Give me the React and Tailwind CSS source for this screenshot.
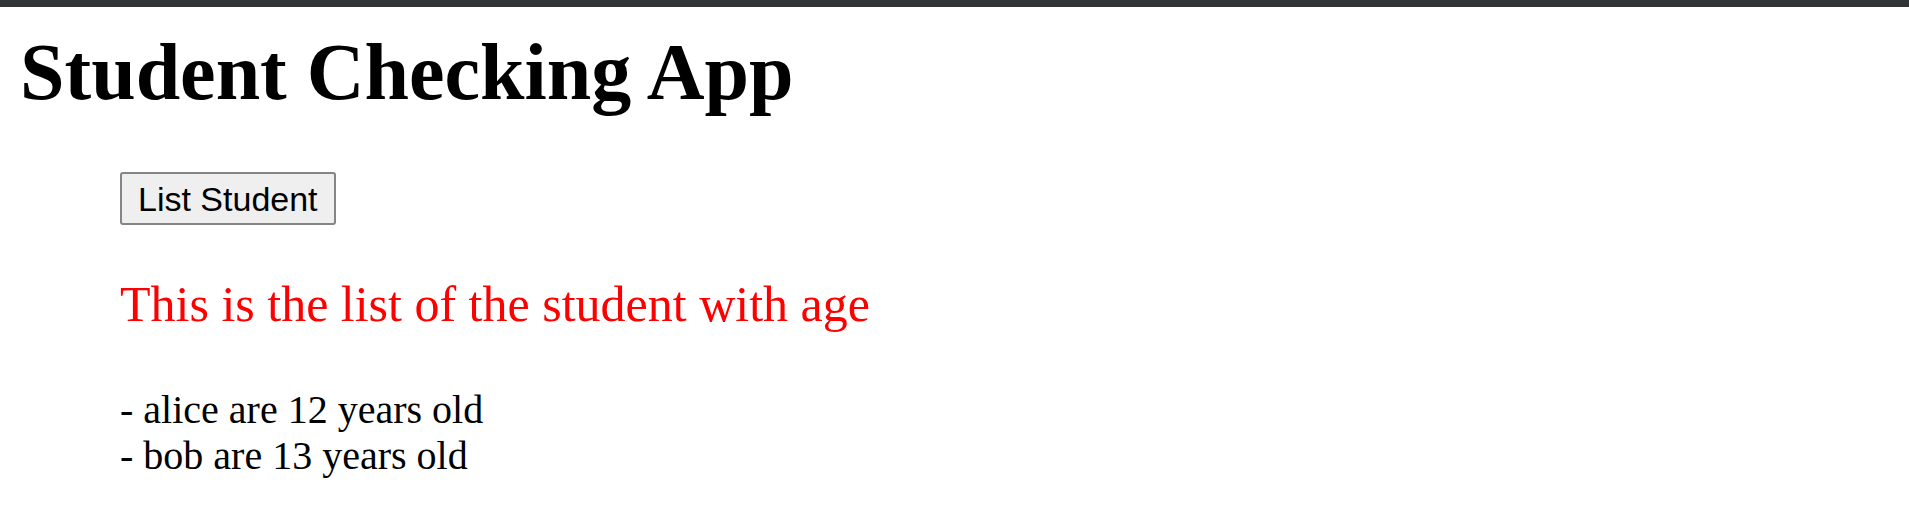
import React from 'react';

const students = [
  { name: 'alice', age: 12 },
  { name: 'bob', age: 13 },
];

const App = () => {
  return (
    <div className="min-h-screen bg-white text-black font-['Liberation_Serif','Times_New_Roman',serif]">
      {/* dark strip along the top edge */}
      <div className="h-[7px] bg-[#333438]" />

      <div className="px-[20px]">
        <h1 className="mt-[25px] text-[80px] leading-[80px] font-bold">Student Checking App</h1>

        <div className="pl-[100px]">
          <button className="mt-[60px] h-[53px] px-[16px] bg-[#efefef] border-2 border-[#858585] rounded-[3px] text-[34px] leading-none font-['Liberation_Sans',Arial,sans-serif] text-black">
            List Student
          </button>

          <h3 className="mt-[54px] text-[50px] leading-[50px] text-[#ff0000]">
            This is the list of the student with age
          </h3>

          <ul className="mt-[58px] text-[40px] leading-[46px]">
            {students.map((s) => (
              <li key={s.name}>- {s.name} are {s.age} years old</li>
            ))}
          </ul>
        </div>
      </div>
    </div>
  );
};

export default App;
